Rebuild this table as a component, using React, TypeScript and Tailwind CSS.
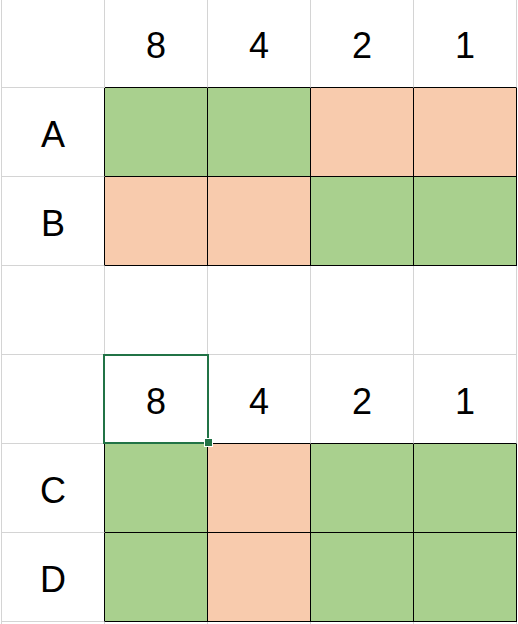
const GREEN = 'bg-[#a9d08e]';
const PEACH = 'bg-[#f8cbad]';

type Cell = { text?: string; fill?: 'g' | 'p' };

const rows: Cell[][] = [
  [{}, { text: '8' }, { text: '4' }, { text: '2' }, { text: '1' }],
  [{ text: 'A' }, { fill: 'g' }, { fill: 'g' }, { fill: 'p' }, { fill: 'p' }],
  [{ text: 'B' }, { fill: 'p' }, { fill: 'p' }, { fill: 'g' }, { fill: 'g' }],
  [{}, {}, {}, {}, {}],
  [{}, { text: '8' }, { text: '4' }, { text: '2' }, { text: '1' }],
  [{ text: 'C' }, { fill: 'g' }, { fill: 'p' }, { fill: 'g' }, { fill: 'g' }],
  [{ text: 'D' }, { fill: 'g' }, { fill: 'p' }, { fill: 'g' }, { fill: 'g' }],
  [{}, {}, {}, {}, {}],
];

// edges touching a coloured cell are drawn black
const isFilled = (r: number, c: number) => !!rows[r]?.[c]?.fill;

export default function App() {
  return (
    <div className="w-[518px] h-[624px] overflow-hidden bg-white">
      <div className="relative ml-px w-[516px] border-l border-[#d4d4d4] font-['Liberation_Sans',Arial,sans-serif] text-[36px] text-black">
        {rows.map((row, r) => (
          <div key={r} className={`flex ${r === 0 ? 'h-[88px]' : 'h-[89px]'}`}>
            {row.map((cell, c) => {
              const rightBlack = isFilled(r, c) || isFilled(r, c + 1);
              const bottomBlack = isFilled(r, c) || isFilled(r + 1, c);
              return (
                <div
                  key={c}
                  className={`flex w-[103px] shrink-0 items-center justify-center border-r border-b pt-[5px] ${
                    rightBlack ? 'border-r-black' : 'border-r-[#d4d4d4]'
                  } ${bottomBlack ? 'border-b-black' : 'border-b-[#d4d4d4]'} ${
                    cell.fill === 'g' ? GREEN : cell.fill === 'p' ? PEACH : ''
                  }`}
                >
                  {cell.text}
                </div>
              );
            })}
          </div>
        ))}

        {/* active cell selection */}
        <div className="pointer-events-none absolute left-[101px] top-[354px] h-[90px] w-[106px] border-2 border-[#217346]" />
        <div className="pointer-events-none absolute left-[202px] top-[438px] h-[9px] w-[9px] border border-white bg-[#217346]" />
      </div>
    </div>
  );
}
